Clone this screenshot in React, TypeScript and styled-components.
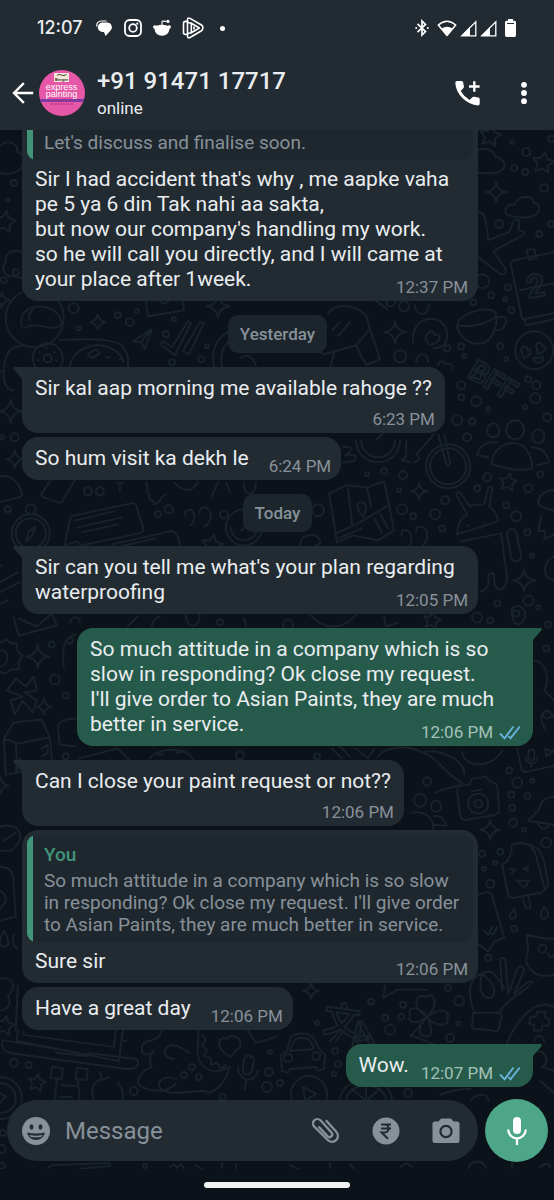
import React from "react";
import styled, { createGlobalStyle } from "styled-components";

const color = {
  panel: "#232b32",
  canvas: "#0b1219",
  doodle: "#19222a",
  text: "#e9edf0",
  muted: "#87919a",
  chip: "#1c252b",
  quote: "#1f272e",
  accent: "#429479",
  sent: "#265b4b",
  sentMuted: "#a3c1b7",
  mic: "#4ca687",
  tick: "#68b4dd",
};

const Global = createGlobalStyle`
  *, *::before, *::after { box-sizing: border-box; }
  body { margin: 0; background: ${color.canvas}; font-family: Roboto, "Noto Sans", sans-serif; color: ${color.text}; }
  button { border: 0; padding: 0; background: none; color: inherit; font: inherit; cursor: pointer; display: flex; align-items: center; justify-content: center; }
  svg { display: block; flex: none; }
`;

const Screen = styled.div`
  min-height: 100vh;
  display: flex;
  flex-direction: column;
`;

const TopBar = styled.header`
  background: ${color.panel};
  display: flex;
  flex-direction: column;
`;

const StatusBar = styled.div`
  height: 56px;
  padding: 0 38px 0 37px;
  display: flex;
  align-items: center;
  justify-content: space-between;
`;

const StatusGroup = styled.div<{ $gap: number }>`
  display: flex;
  align-items: center;
  gap: ${(p) => p.$gap}px;
`;

const Clock = styled.time`
  margin-right: 2px;
  font-family: Inter, sans-serif;
  font-size: 18px;
  font-weight: 500;
  line-height: 24px;
`;

const MoreDot = styled.span`
  width: 5px;
  height: 5px;
  margin-left: 5px;
  border-radius: 50%;
  background: #fff;
`;

const ContactBar = styled.div`
  height: 74px;
  padding: 0 18px 0 12px;
  display: flex;
  align-items: center;
`;

const Avatar = styled.span`
  display: flex;
  margin: 0 12px 0 5px;
`;

const Contact = styled.div`
  flex: 1;
  min-width: 0;
`;

const ContactName = styled.h1`
  margin: 0;
  font-size: 24px;
  font-weight: 500;
  line-height: 30px;
  white-space: nowrap;
`;

const Presence = styled.p`
  margin: 0;
  font-size: 17px;
  line-height: 24px;
`;

const HeaderActions = styled.div`
  display: flex;
  gap: 31px;
  align-items: center;
`;

const Chat = styled.main`
  position: relative;
  flex: 1;
  display: flex;
  flex-direction: column;
  padding-bottom: 7px;
  overflow: hidden;
`;

const Wallpaper = styled.svg`
  position: absolute;
  inset: 0;
  width: 100%;
  height: 100%;
  fill: none;
  stroke: ${color.doodle};
  stroke-width: 2;
  stroke-linecap: round;
  stroke-linejoin: round;
  font-family: Roboto, "Noto Sans CJK SC", sans-serif;
  font-weight: 700;
`;

const Thread = styled.div`
  position: relative;
  flex: 1;
  display: flex;
  flex-direction: column;
  padding: 0 21px 12px 22px;
`;

const Chip = styled.div`
  align-self: center;
  margin-top: 14px;
  padding: 8px 12px;
  border-radius: 10px;
  background: ${color.chip};
  color: ${color.muted};
  font-size: 17px;
  font-weight: 500;
  line-height: 22px;
`;

type Side = "in" | "out";

const BubbleBox = styled.article<{ $side: Side; $tail: boolean; $cut: boolean }>`
  position: relative;
  align-self: ${(p) => (p.$side === "in" ? "flex-start" : "flex-end")};
  max-width: calc(100% - 55px);
  margin-top: ${(p) => (p.$cut ? 0 : p.$tail ? 14 : 4)}px;
  background: ${(p) => (p.$side === "in" ? color.panel : color.sent)};
  border-radius: ${(p) =>
    p.$cut
      ? "0 0 16px 16px"
      : !p.$tail
        ? "16px"
        : p.$side === "in"
          ? "0 16px 16px 16px"
          : "16px 0 16px 16px"};
`;

const Tail = styled.svg<{ $side: Side }>`
  position: absolute;
  top: 0;
  ${(p) => (p.$side === "in" ? "left: -9px;" : "right: -9px; transform: scaleX(-1);")}
  fill: ${(p) => (p.$side === "in" ? color.panel : color.sent)};
`;

const Body = styled.div<{ $below: boolean; $afterQuote: boolean }>`
  display: ${(p) => (p.$below ? "flex" : "flow-root")};
  flex-direction: column;
  padding: ${(p) => (p.$afterQuote ? 7 : 9)}px 13px 6px;
  font-size: 21px;
  line-height: 25px;
  white-space: pre-line;
`;

const Meta = styled.span<{ $side: Side; $below: boolean }>`
  float: right;
  align-self: flex-end;
  display: flex;
  align-items: center;
  gap: 6px;
  margin: ${(p) => (p.$below ? 10 : 12)}px -3px 0 ${(p) => (p.$side === "in" ? 20 : 12)}px;
  padding-right: ${(p) => (p.$side === "in" ? 0 : 2)}px;
  color: ${(p) => (p.$side === "in" ? color.muted : color.sentMuted)};
  font-size: 17px;
  line-height: 16px;
  white-space: nowrap;
`;

const Quote = styled.blockquote<{ $cut: boolean }>`
  margin: ${(p) => (p.$cut ? 0 : 5)}px 5px 0;
  padding: ${(p) => (p.$cut ? 2 : 9)}px 10px 6px 17px;
  border-radius: ${(p) => (p.$cut ? "0 0 9px 9px" : "9px")};
  background: linear-gradient(to right, ${color.accent} 6px, ${color.quote} 6px);
  color: ${color.muted};
  font-size: 19px;
  line-height: 22px;
`;

const QuoteAuthor = styled.cite`
  display: block;
  margin-bottom: 4px;
  color: ${color.accent};
  font-style: normal;
  font-weight: 500;
`;

const Composer = styled.form`
  position: relative;
  display: flex;
  align-items: center;
  gap: 7px;
  padding: 0 6px 0 7px;
`;

const InputPill = styled.div`
  flex: 1;
  min-width: 0;
  height: 61px;
  display: flex;
  align-items: center;
  padding: 0 18px 0 15px;
  border-radius: 31px;
  background: ${color.panel};
  color: ${color.muted};
`;

const MessageInput = styled.input`
  flex: 1;
  min-width: 0;
  margin-left: 15px;
  padding: 0;
  border: 0;
  outline: 0;
  background: none;
  color: ${color.text};
  font: 24px/30px Roboto, sans-serif;
  &::placeholder { color: ${color.muted}; opacity: 1; }
`;

const PillActions = styled.div`
  display: flex;
  align-items: center;
  gap: 32px;
`;

const MicButton = styled.button`
  && {
    width: 63px;
    height: 63px;
    border-radius: 50%;
    background: ${color.mic};
    color: #fff;
  }
`;

const GestureBar = styled.footer`
  height: 32px;
  display: flex;
  justify-content: center;
  align-items: center;
  background: ${color.canvas};
`;

const GestureHandle = styled.span`
  width: 146px;
  height: 6px;
  border-radius: 3px;
  background: #f2f2f2;
`;

/* ---------- wallpaper doodles ---------- */

const dots: [number, number, number][] = [
  [526, 152, 4], [514, 168, 3], [525, 172, 3], [544, 188, 4], [499, 224, 4], [539, 234, 3], [551, 224, 3], [512, 142, 2], [551, 139, 3],
  [482, 281, 7], [508, 287, 3], [491, 295, 3], [505, 299, 2], [511, 310, 3], [404, 306, 5], [473, 302, 3],
  [400, 356, 6], [447, 348, 3], [461, 346, 3], [500, 346, 3], [464, 356, 2], [506, 359, 2],
  [461, 385, 4], [461, 397, 3], [476, 401, 5], [528, 379, 3], [536, 385, 4], [535, 398, 5], [525, 407, 2], [547, 417, 4], [457, 420, 5], [488, 409, 2], [472, 421, 3],
  [467, 437, 4], [384, 471, 3], [367, 474, 2], [403, 475, 4], [487, 477, 4], [477, 488, 3], [540, 474, 3], [528, 488, 4],
  [399, 490, 2], [445, 500, 4], [402, 509, 5], [413, 516, 3], [435, 514, 5], [442, 528, 3], [506, 505, 3], [516, 516, 5], [527, 532, 3], [318, 510, 6], [532, 555, 2],
  [528, 600, 5], [497, 603, 3], [538, 607, 2], [477, 617, 5], [490, 620, 3], [548, 624, 3], [546, 648, 3],
  [74, 308, 5], [130, 322, 4], [118, 315, 3], [79, 328, 2], [174, 319, 2], [137, 311, 2], [166, 334, 3], [201, 359, 3], [207, 346, 2], [172, 362, 3],
  [15, 437, 4], [2, 437, 2], [88, 491, 4], [100, 491, 4], [8, 509, 3], [158, 514, 3], [169, 509, 4], [224, 514, 4],
  [14, 183, 3], [8, 200, 2], [4, 280, 3], [16, 272, 3],
  [52, 644, 3], [55, 679, 5], [66, 695, 3], [66, 756, 3], [70, 640, 3], [220, 622, 3], [288, 624, 5], [285, 765, 3], [240, 755, 4],
  [317, 756, 3], [427, 781, 4], [509, 770, 3], [517, 782, 5], [532, 780, 2], [527, 795, 3], [511, 794, 3], [512, 807, 3], [513, 822, 4], [524, 829, 2], [546, 842, 5],
  [482, 853, 3], [500, 851, 3], [484, 868, 2], [490, 883, 4], [495, 862, 2], [488, 957, 3], [514, 928, 3],
  [459, 1000, 5], [448, 987, 3], [371, 1001, 3], [403, 1004, 3], [385, 1017, 3], [401, 1016, 3], [390, 1029, 5], [317, 1022, 2], [458, 1023, 2], [450, 1037, 4],
  [335, 1050, 3], [338, 1063, 3], [334, 1073, 2], [408, 1092, 4], [280, 1082, 3],
  [14, 1062, 4], [29, 1064, 3], [134, 1090, 4], [192, 1066, 3], [184, 1074, 3], [199, 1076, 3], [270, 1051, 2], [269, 1071, 4], [267, 1086, 5], [223, 1096, 3],
  [3, 1132, 3], [2, 1148, 4], [2, 1165, 3], [145, 1165, 2],
];

const sparkles: [number, number, number][] = [
  [496, 192, 10], [395, 332, 11], [98, 322, 8], [218, 306, 12], [11, 411, 12], [419, 491, 8], [524, 580, 11],
  [38, 656, 12], [44, 706, 8], [490, 829, 10], [311, 990, 8], [2, 300, 8], [15, 459, 9], [1, 785, 8],
];

const stars: [number, number, number][] = [
  [490, 136, 11], [543, 163, 11], [508, 482, 9], [5, 222, 11], [37, 1082, 9], [212, 545, 11], [432, 620, 9], [5, 1025, 10],
];

const sparklePath = (x: number, y: number, r: number) =>
  `M${x} ${y - r}Q${x + 1} ${y - 1} ${x + r} ${y}Q${x + 1} ${y + 1} ${x} ${y + r}Q${x - 1} ${y + 1} ${x - r} ${y}Q${x - 1} ${y - 1} ${x} ${y - r}z`;

const starPath = (x: number, y: number, r: number) =>
  Array.from({ length: 10 }, (_, i) => {
    const a = (i * Math.PI) / 5 - 1.4;
    const d = i % 2 ? r * 0.5 : r;
    return `${i ? "L" : "M"}${(x + d * Math.cos(a)).toFixed(1)} ${(y + d * Math.sin(a)).toFixed(1)}`;
  }).join("") + "z";

const sketches = [
  // clouds
  "M506 214c-3-7 3-11 8-9 2-10 19-11 20-2 7 1 6 9 1 12-9 4-21 3-29-1z",
  "M478 150c7-3 16 0 17 7 7 1 12 7 8 12-6 6-16 4-25 4",
  "M0 146c8-8 18-2 18 6 8 2 8 16-2 20-4 2-10 2-16 1M22 252c-10-4-18 2-16 10-6 6 0 16 8 14l8 2",
  // aeroplane
  "M478 212c7 0 8 8 10 28l21-8 4-10c2-4 6-3 6 1l-1 7 6 2c1 2-2 4-5 5l-26 14 12 17c2 6-2 8-6 5l-21-16",
  // calendar
  "M554 252l-40 8c-3 1-4 3-3 6l11 53 32-6M520 290l34-7M526 250l8-1 2 9-7 2zM524 320l2 5 28-6",
  // cup
  "M457 325c2-14 38-22 39-10 2 14-6 26-14 28-14 3-24-8-25-18zM458 325c12 3 28-1 38-9M496 318c10-4 12 2 8 8-3 5-6 4-9 4",
  // love face
  "M515 350a19 19 0 1 0 38 0a19 19 0 1 0-38 0M521 350c0-5 6-4 6 0 5-2 5 5-4 8zM536 346c0-5 6-4 6 0 5-2 5 5-4 8zM533 358l10-1c0 6-8 8-10 1",
  // bauble, heart
  "M413 342c-4-28 34-32 34-6 0 8-6 12-14 12M427 334c3-5 7-3 7 1 5-3 8 2 3 7l-7 3c-4-4-6-8-3-11z",
  "M375 300l12 9M388 300c-6 6 6 10 8 0M415 305c0 12 14 12 14-2M416 362c0-9 12-12 12 0M438 365c2-6 6-4 7-1 6-2 10 3 6 6",
  // pencil case
  "M328 313c10-12 28-8 38 2l4 14-14 16-32 9M324 354l-18-10M356 345l14-16 10 30-14 6zM334 352l-4 16M332 330l8-8M338 336l12-14",
  // satchel
  "M146 300l2 16 36-6-1-10M160 302a8 8 0 0 0 10-2",
  // ball
  "M6 318a29 29 0 1 0 58 0a29 29 0 1 0-58 0M22 326c-6-26 38-26 40-2-10 10-22-4-38 4M30 320c-2-4 0-8 4-12",
  // blossom and cookie
  "M33 358a15 15 0 1 0 30 0a15 15 0 1 0-30 0M44 358a4 4 0 1 0 8 0a4 4 0 1 0-8 0M39 352h1M46 348h1M54 352h1M38 360h1M56 360h1",
  "M60 340c30-2 60-2 64 8 6 6 4 14 4 18M70 366c4-24 44-30 54-4M88 354l8-5 4 4-8 5zM106 357h4M120 359h3",
  "M22 346c-14 0-18 10-18 30 0 8 4 14 10 14M4 370l-4 2",
  // paper plane
  "M133 341l19-12-7 20-4-7zM141 342l11-13",
  // double tick
  "M160 344l3-3 9 6 16-26 3 2-16 32zM184 349l16-27 4 1-15 31-6-3",
  // big ring
  "M214 366c-6-30 20-38 24-36M222 366c-4-20 10-28 14-28M240 358c8-6 14 0 16 8",
  // lower left shapes
  "M0 476c12-2 22 8 22 20l-22 6M50 481l-8 12c-1 2 0 4 2 4l14 5c3 1 4 0 5-2l12-20M116 483h8M120 483v8",
  "M146 482c4 6-2 10 4 12-4 8 6 4 4 10 8-2 6-8 12-10M174 482c8 8 16 12 24 0M218 482l-6 14M226 482l4 10M244 482c-2 14 12 16 12 0",
  // compass
  "M12 533a19 19 0 1 0 38 0a19 19 0 1 0-38 0M16 533a15 15 0 1 0 30 0a15 15 0 1 0-30 0M26 509a5 5 0 1 0 10 0a5 5 0 1 0-10 0M36 526l-4 10-6 5 3-10z",
  // speech bubbles
  "M66 538l4-18c1-4 3-5 5-5l56-12c4-1 5 1 6 4l6 20c1 4-1 6-4 6l-58 12-4-4-12 4zM76 520l38-9M78 527l44-10M82 532l36-8",
  "M112 544l58-13c6-1 8 3 10 13M120 546l36-8",
  // quotation marks
  "M186 516c-4-6 6-10 8-3 1 6 0 10-4 12M200 513c-2-8 10-8 11 1 0 6-3 11-7 12",
  "M402 536c-4-8 8-9 9 0 1 6-1 9-4 11M416 532c-2-8 11-8 11 2 0 6-2 10-5 11",
  // gauge
  "M226 527a18 18 0 1 0 36 0a18 18 0 1 0-36 0M231 527a13 13 0 1 0 26 0M241 530l12-10M300 545c0-6 4-10 8-10 12-2 16 8 8 10",
  // bicycle
  "M356 440a22 22 0 1 0 44 0M361 440a17 17 0 1 0 34 0M426 466a22 22 0 1 0 44 0a22 22 0 1 0-44 0M430 466a18 18 0 1 0 36 0a18 18 0 1 0-36 0M438 434l8 30c1 3 4 2 4-1l-6-29M434 434l-18 20c4 2 4 6-2 8M406 440v16l-4 4 8 2M376 440l8-8",
  "M343 447c8-2 10 2 6 5l-4 3c10-2 14 2 8 6l-10 1",
  // people
  "M487 431a6 6 0 1 0 12 0a6 8 0 1 0-12 0M506 430a9 9 0 1 0 18 0a9 10 0 1 0-18 0M532 437a6 6 0 1 0 12 0a6 8 0 1 0-12 0M491 464c2-26 40-32 41 4-12 3-28 0-41-4zM497 442c-10 0-18 2-20 13l11 2M531 447c10 0 16 6 18 15l-12 3",
  // map
  "M329 493l17-8 21 2 17-6 10 49-16 10-25-5-16 7zM336 533l22-10 30-18M338 538l24-10M348 488l4 36M367 488l4 18M374 518l8 14M380 514l8 14M358 508c-4-8 8-8 8-1 0 4-2 7-3 10-2-2-4-5-5-9z",
  // android
  "M457 534c0-14 6-18 10-20l-11-20c1-3 3-3 5 0l9 12c4-2 12-2 14-2l4-16c2-3 4-3 4 0l-3 18c4 2 8 8 9 15zM467 525h1M484 522h1M460 541l41-8 6 46c-2 4-1 8-6 10-10 0-6-16-8-16-4 0-6 1-5 4 2 10-4 14-8 14M507 534c-1-6 8-7 9-2l5 24c0 6-9 6-10 1z",
  // right edge items
  "M554 490c-10 0-16 6-16 12 2 6 8 6 16 8M541 516l-3 14 7 1-1 8 10-5M554 556c-10 4-10 14-8 20l8 4",
  "M516 624c-14-20 8-24 9-10 0 6-4 10-9 10zM513 613a3 3 0 1 0 6 0a3 3 0 1 0-6 0",
  // row under the waterproofing message
  "M14 617l5 18 38-10-4-10M19 618l18 8 14-12M70 622c4-8 10-6 10 0M128 626l10-10M160 616c-4 0-8 6-8 10M186 614c0 16 14 14 14 0M244 618l2 8M310 614c14 16 34 16 46 0M384 616l2 10 12-4",
  // gear and pinwheel
  "M0 642l6-3 6 4 5 0 1 8 5 4-4 6 0 8-8 0-5 4-6-2M0 650c10-2 10 16 0 16",
  "M16 678l10 8 8-10 3 14-12 2 12 8-4 12-10-12-8 14-4-14 12-4-16-6z",
  // milk carton
  "M4 738l10-16 28-3 8 18-32 6zM4 738l2 36 12-2-2-29M50 737l3 30M20 758c-4 8-6 14 0 14 6-1 4-8 0-14zM42 748l6-4 0 8-6 4M76 718c-8 0-16 2-18 8l2 18 16 2",
  "M76 634c-12 2-14 16-12 32M78 758l40-10 12 12M150 758c6-10 36-14 44 2M158 754h5M176 752h5M332 748l10 10M340 746l10 10M356 748l12 10 6-10",
  // right edge by the sent message
  "M534 660c12 2 16 18 10 30l10 10M546 730c-14-20 6-26 8-10M543 714a4 4 0 1 0 8 0a4 4 0 1 0-8 0",
  // whale and card
  "M378 756c6-10 30-12 44-4 16 4 20 20 40 30-4 6-18 4-26 10M422 752c16-6 44 8 42 22M462 752c2 14 28 18 40-2M517 748l4 20c1 3 3 4 6 3l27-6M528 752a3 3 0 0 1 6 0v5a3 3 0 0 1-6 0zM525 757c2 8 12 8 12 0M531 763v4M545 748l8 3-7 5z",
  // small group
  "M414 800a6 6 0 1 0 12 0a6 7 0 1 0-12 0M431 806a5 5 0 1 0 10 0a5 6 0 1 0-10 0M412 812c14-2 22 6 21 16M434 815c8 0 12 6 12 10l-12-1",
  // camera
  "M457 790c0-3 1-4 4-5l8-1 3-6 14-2 4 5 3 1c3 0 4 1 4 4l2 22c0 4-1 5-4 6l-28 5c-4 1-6-1-7-4zM468 803a10 10 0 1 0 20 0a10 10 0 1 0-20 0M474 803a4 4 0 1 0 8 0a4 4 0 1 0-8 0M471 791l10-2",
  // bell
  "M554 796c-12 0-14 8-16 14l-10 10 26 4M538 823c2 6 8 6 10 2",
  // ice cream
  "M502 864l6 30c1 3 3 4 6 3l26-5c4-1 5-3 4-6l-8-30c-4-14-14-16-24-12-3 4 2 6-2 8 2 6-4 4-2 8-3 2-4 2-6 4zM522 843c14 0 18 6 22 18l4 22c0 4-4 6-6 8M522 896l3 10c1 2 6 2 5-1l-2-10M510 868l5 1-4 4M528 866l-5 2 5 2M516 880h14M519 880c0 8 10 8 8 0",
  // drops and note
  "M514 908c-5 6-6 10-2 10 5-1 4-4 2-10zM544 906c-5 6-4 12 0 12 7-2 3-8 0-12zM478 894c6-3 12-4 14 1l12 42-10 4-6 10-10-8M484 930l4 4 4-8M490 932l3 2 4-8",
  // cat
  "M554 938l-8 0-20-4 2 14c-2 12-4 12 2 20 6 8 16 8 24 6M538 948a4 4 0 1 0 8 0a4 4 0 1 0-8 0M548 952c0 6 6 4 6 2",
  // hand
  "M473 1016c-1-4 0-4 4-4l20 0c4 0 5 2 4 5l-2 10c-1 3-3 4-6 3l-18-2c-3 0-4-2-3-5zM474 1011c-8-20-4-36 8-38 10 8 16 16 10 24-12 2-14-12-10-24M500 1011c4-12 32-24 32-30-6-2-12 8-18 12l10-24c-2-5-6-4-8 2l-8 22-3-34c-2-3-5-3-5 1l2 30M482 973c10-6 12 0 22 14",
  // clover
  "M427 1016c-18-12-10-24-2-20 10-6 14 8 2 20zM427 1016c16-12 24-4 20 2 4 8-14 8-20-2zM427 1016c8 18 2 22-3 19-8 0-4-14 3-19zM427 1016c-14 10-20 4-17-2-4-8 8-10 17 2zM424 1020l-14 16M385 985l-2 12 14-8 30 0",
  // gamepad
  "M506 1044c8-20 24-42 40-40l8 2M530 1016l6 0 1-5 8 0 0 6 4 1-1 7-6 0-1 5-7 0 0-6-5-1zM534 1040a5 5 0 0 1 10 0",
  // car
  "M282 1070l-1-16 6-4 3-12c2-6 18-8 24 0l5 10 6 6-1 14-6 2-2-4-26 2-2 4zM290 1050l4-10c4-4 12-4 16 0l4 8zM284 1057a4 4 0 1 0 8 0a4 4 0 1 0-8 0M312 1055a4 4 0 1 0 8 0a4 4 0 1 0-8 0",
  // play and citrus
  "M291 1093a18 18 0 1 0 36 0a18 18 0 1 0-36 0M303 1086l13 7-11 7zM340 1098c4-26 48-26 52 0M346 1098c4-18 36-18 40 0M366 1098v-12M352 1088l12 10M380 1088l-12 10M440 1094c10-4 16-6 30-6M470 1100c8-10 20-6 18 0",
  "M330 1040l10-10M344 1030l-8 10M410 1034l30 12M536 1050c10 0 14 12 6 16l12 4M540 1080l14 12",
  // laptop
  "M18 1030l-1 10 102 20 4-30M24 1030l0 4 90 12 2-16M2 1043c0-3 2-4 5-3l48 8 2 4 30 3 2-3 46 6c4 1 4 4 2 7-2 4-6 3-10 3L10 1052c-4-1-8-5-8-9z",
  // dinosaur
  "M162 1030c-4 14-20 6-20 18 0 8 8 6 12 2-6 8-4 14-2 16-12 4-18 16-10 20 18 8 30 2 34-4M176 1078c-16-6-22 8-12 12 14 6 42-4 44 2 12-2 18-14 22-26-12 6-20 6-28-2-8-10-2-20-4-34M190 1052c-10-6-20-12-24-4-4 6 2 10 8 10M202 1034l4 5-4 5 5 5-3 6 7 2 0 7 6-2 4 6 5-4",
  // heart and microphone
  "M230 1056c-18-12-10-22-3-18 4-6 16-2 13 8zM244 1060c0-8 10-6 10 0l-2 10c-2 6-10 4-9-2zM238 1066c0 14 16 18 20 4M246 1080l-1 8M248 1030l8 12 20-6",
  // creeper, reload, clock
  "M52 1066l11 1-1 11-11-1zM77 1067l11 1-1 11-11-1zM55 1100l2-22M80 1100l-2-20M62 1084l14 1M60 1096h12M100 1071l2 8 8-3M94 1098c-4-10 0-18 8-20M118 1082c6 6 6 12 4 18",
  "M0 1076c14 0 22 10 22 22s-8 20-22 20M0 1082c10 0 16 8 16 16s-6 14-16 14M0 1092l6 4-6 6",
  // strip below the composer
  "M48 1168c2-4 4-4 8-4l54-2v3l-30 3M170 1166l4-3 3 4 4-4 3 4M196 1164l6 4M222 1162v6M236 1163v5M290 1164l8 4M330 1162v6M350 1163l4 5M400 1166l6-4 6 4M468 1168c2-10 16-10 18 0M512 1162v6M540 1166c4-4 8-4 10 0",
  // left edge, lower half
  "M0 826c14-4 22 2 20 14l-8 10-12 0M4 840l12-8M0 866c14 0 14 10 14 20l2 30-16 4M0 890c8 4 8 12 0 18M4 930c-4 8-6 14 0 16 8 0 4-10 0-16zM14 934c-2 8 0 12 4 14M0 978c16-4 16 12 8 16 4 8 2 14-8 16M18 985l-2 44",
  "M0 565h2M8 600l-8 4M0 582l18-10M0 592l20-10M124 1040h2",
];

const Doodles = () => (
  <Wallpaper viewBox="0 130 554 1038" preserveAspectRatio="xMidYMin slice" aria-hidden="true">
    {dots.map(([x, y, r], i) => (
      <circle key={i} cx={x} cy={y} r={r} />
    ))}
    {sparkles.map(([x, y, r], i) => (
      <path key={i} d={sparklePath(x, y, r)} />
    ))}
    {stars.map(([x, y, r], i) => (
      <path key={i} d={starPath(x, y, r)} />
    ))}
    {sketches.map((d, i) => (
      <path key={i} d={d} />
    ))}
    <text x="466" y="376" fontSize="29" transform="rotate(31 466 376)">BFF</text>
    <text x="528" y="298" fontSize="32" transform="rotate(-9 528 298)">2</text>
    <text x="322" y="1030" fontSize="36" transform="rotate(8 322 1030)">文</text>
    <text x="352" y="1046" fontSize="34" transform="rotate(-8 352 1046)">A</text>
  </Wallpaper>
);

/* ---------- icons ---------- */

const MessagesIcon = () => (
  <svg width="17" height="17" viewBox="0 0 17 17">
    <path d="M.9 6.500C.2 3 2.500 1 5.500 1h5" fill="none" stroke="#fff" strokeWidth="1.200" />
    <path d="M6.500 2.500h5A4.700 4.700 0 0 1 14.800 10.200L9.500 16 8 12H6.500a4.750 4.750 0 0 1 0-9.500z" fill="#fff" />
  </svg>
);

const InstagramIcon = () => (
  <svg width="18" height="18" viewBox="0 0 18 18" fill="none" stroke="#fff" strokeWidth="1.800">
    <rect x="1" y="1" width="16" height="16" rx="4.500" />
    <circle cx="9" cy="9" r="3.800" />
    <circle cx="13.300" cy="4.700" r="1.100" fill="#fff" stroke="none" />
  </svg>
);

const RedditIcon = () => (
  <svg width="18" height="18" viewBox="0 0 18 18" fill="#fff">
    <path d="M0 7.500Q1.200 5.600 3.600 6.800Q9 4.900 14.400 6.800Q16.800 5.600 18 7.500Q18 9.200 16.500 10Q15.500 16.800 9 16.800T1.500 10Q0 9.200 0 7.500z" />
    <path d="M9 6.500V2.800Q9 2 10 2.100L13.500 2.400" fill="none" stroke="#fff" strokeWidth="1.100" />
    <circle cx="15" cy="2.400" r="1.600" />
  </svg>
);

const PlayBadgeIcon = () => (
  <svg width="22" height="22" viewBox="0 0 22 22" fill="none" stroke="#fff" strokeLinejoin="round" strokeLinecap="round" strokeWidth="1.600">
    <path d="M5.500 2.800Q5.500.2 8 1.400L19.500 8Q21 9 20.900 10.800T19.500 13.800L8 20.500Q5.500 21.600 5.500 19z" />
    <path d="M9.300 6.300L17.300 11 9.300 15.700z" />
    <path d="M12 10v2M5.500 5.500L9.300 6.300M5.500 16.500L9.300 15.700" />
    <path d="M5.500 4.400H3.500Q1.500 4.600 1.500 6.500V15.500Q1.500 17.400 3.500 17.500H5.500" />
  </svg>
);

const BluetoothIcon = () => (
  <svg width="14" height="18" viewBox="0 0 14 18" fill="none" stroke="#fff" strokeWidth="1.700">
    <path d="M2.500 4.800l8 7.800L7 16V2l3.500 3.400-8 7.800" />
    <circle cx="1.200" cy="9" r="1" fill="#fff" stroke="none" />
    <circle cx="12.800" cy="9" r="1" fill="#fff" stroke="none" />
  </svg>
);

const WifiIcon = () => (
  <svg width="20" height="17" viewBox="0 0 20 17">
    <path d="M1.300 5Q10-2.500 18.700 5L10 15.500z" fill="none" stroke="#fff" strokeWidth="1.500" strokeLinejoin="round" />
    <path d="M4.500 8.500Q10 4.800 15.500 8.500L10 15.500z" fill="#fff" />
  </svg>
);

const SignalIcon = () => (
  <svg width="17" height="17" viewBox="0 0 17 17">
    <path d="M15.800 1.800v14H1.800z" fill="none" stroke="#fff" strokeWidth="1.300" />
    <path d="M10 7v9H1z" fill="#fff" />
  </svg>
);

const BatteryIcon = () => (
  <svg width="11" height="18" viewBox="0 0 11 18">
    <path d="M3 0h5v1.800h1.500Q11 1.800 11 3.300v13Q11 18 9.500 18h-8Q0 18 0 16.300v-13Q0 1.800 1.500 1.800H3z" fill="#fff" />
    <path d="M2 4h7v1H2z" fill={color.panel} />
  </svg>
);

const BackIcon = () => (
  <svg width="22" height="22" viewBox="0 0 22 22" fill="none" stroke="#fff" strokeWidth="2.400" strokeLinecap="square">
    <path d="M20 11H2.500M11 2L2 11l9 9" />
  </svg>
);

const AvatarBadge = () => (
  <svg width="46" height="46" viewBox="0 0 46 46" role="img" aria-label="Berger express painting">
    <defs>
      <clipPath id="avatarClip">
        <circle cx="23" cy="23" r="23" />
      </clipPath>
    </defs>
    <g clipPath="url(#avatarClip)">
      <rect width="46" height="46" fill="#e657a7" />
      <rect x="15" y="3" width="15" height="9" fill="#efe6d3" />
      <path d="M18 5.500q2-2 4.500-.5t5-.5" stroke="#54423b" strokeWidth="1" fill="none" />
      <rect x="1" y="29" width="44" height="3" fill="#7a3ba3" />
      <path d="M12 30.500h22M11 34h24" stroke="#b0327e" strokeWidth="1" strokeDasharray="3 1" />
    </g>
    <g fontFamily="Liberation Sans, Arial, sans-serif" textAnchor="middle">
      <text x="22.500" y="10.500" fontSize="4" fontWeight="700" fill="#3a2b2b">Berger</text>
      <text x="22.500" y="20" fontSize="9" fill="#fff">express</text>
      <text x="22.500" y="27" fontSize="9" fill="#fff">painting</text>
    </g>
  </svg>
);

const AddCallIcon = () => (
  <svg width="26" height="26" viewBox="0 0 26 26" fill="#fff">
    <path d="M2 1h4.600Q8 1 8.200 2.500l.7 3.900q.2 1.100-.6 1.900L5.700 10.900q3.300 5.800 8.900 9l2.700-2.600q.8-.8 1.900-.6l4 .8q1.500.3 1.500 1.800v4.400q0 1.700-1.700 1.700Q14.500 24.800 7.600 18.200T.3 2.800Q.3 1 2 1z" />
    <path d="M19.300 1.200v10.600M14 6.500h10.600" stroke="#fff" strokeWidth="2.400" />
  </svg>
);

const MoreIcon = () => (
  <svg width="24" height="24" viewBox="0 0 24 24" fill="#fff">
    <circle cx="12" cy="3.800" r="2.900" />
    <circle cx="12" cy="12" r="2.900" />
    <circle cx="12" cy="20.200" r="2.900" />
  </svg>
);

const ReadTicks = () => (
  <svg width="22" height="15" viewBox="0 0 22 15" fill="none" stroke={color.tick} strokeWidth="1.900" aria-label="Read">
    <path d="M1 8.500l4.600 4.800L14.500 1.500M9.500 11l2 2.300L20.800 1.500" />
  </svg>
);

const SmileyIcon = () => (
  <svg width="28" height="28" viewBox="0 0 28 28">
    <circle cx="14" cy="14" r="14" fill="currentColor" />
    <g fill={color.panel}>
      <ellipse cx="9.500" cy="10" rx="2" ry="2.700" />
      <ellipse cx="18.500" cy="10" rx="2" ry="2.700" />
      <path d="M5 15.500q9 2 18 0Q21 23 14 23T5 15.500z" />
    </g>
    <path d="M7.500 18q6.500 1.500 13 0l-1 1.800q-5.500 1-11 0z" fill="currentColor" />
  </svg>
);

const ClipIcon = () => (
  <svg width="29" height="27" viewBox="0 0 29 27" fill="none" stroke="currentColor" strokeWidth="2.300" strokeLinecap="round">
    <path d="M15.500 4L25.300 14.800a5.900 5.900 0 0 1-8.600 8.200L3.300 9.600A4.300 4.300 0 0 1 9.500 3.300L20.700 15.800a2.700 2.700 0 0 1-4 3.600L8.200 10.200" />
  </svg>
);

const RupeeIcon = () => (
  <svg width="28" height="28" viewBox="0 0 28 28">
    <circle cx="14" cy="14" r="13.500" fill="currentColor" />
    <path d="M9 7.500h10M9 11.500h10M9 7.500h3.500q4 .3 4 4t-4 4H9.500l6.500 6.300" fill="none" stroke={color.panel} strokeWidth="2" />
  </svg>
);

const CameraIcon = () => (
  <svg width="28" height="26" viewBox="0 0 28 26">
    <path d="M10 .5h8q.8 0 1.400.6L21.500 3.500H25Q27.500 3.500 27.500 6v16.500q0 2.500-2.500 2.500H3Q.5 25 .5 22.500V6Q.5 3.500 3 3.500h3.500L8.600 1.100Q9.200.5 10 .5z" fill="currentColor" />
    <circle cx="14" cy="13.500" r="5.600" fill="none" stroke={color.panel} strokeWidth="2.200" />
  </svg>
);

const MicIcon = () => (
  <svg width="20" height="28" viewBox="0 0 20 28">
    <rect x="6" y="0" width="8" height="17" rx="4" fill="#fff" />
    <path d="M1.200 12.500a8.800 8.800 0 0 0 17.600 0M10 21.500V28" fill="none" stroke="#fff" strokeWidth="2.300" />
  </svg>
);

/* ---------- messages ---------- */

interface MessageProps {
  text: string;
  time: string;
  side?: Side;
  tail?: boolean;
  cut?: boolean;
  below?: boolean;
  quote?: { author?: string; text: string };
}

const Message = ({ text, time, side = "in", tail = false, cut = false, below = false, quote }: MessageProps) => (
  <BubbleBox $side={side} $tail={tail} $cut={cut}>
    {tail && (
      <Tail $side={side} width="10" height="13" viewBox="0 0 10 13" aria-hidden="true">
        <path d="M1.500 0H10v13L.8 2.600Q-.6 0 1.500 0z" />
      </Tail>
    )}
    {quote && (
      <Quote $cut={cut}>
        {quote.author && <QuoteAuthor>{quote.author}</QuoteAuthor>}
        {quote.text}
      </Quote>
    )}
    <Body $below={below} $afterQuote={Boolean(quote)}>
      <span>{text}</span>
      <Meta $side={side} $below={below}>
        <time>{time}</time>
        {side === "out" && <ReadTicks />}
      </Meta>
    </Body>
  </BubbleBox>
);

export default function App() {
  return (
    <Screen>
      <Global />
      <TopBar>
        <StatusBar>
          <StatusGroup $gap={11}>
            <Clock>12:07</Clock>
            <MessagesIcon />
            <InstagramIcon />
            <RedditIcon />
            <PlayBadgeIcon />
            <MoreDot />
          </StatusGroup>
          <StatusGroup $gap={8}>
            <BluetoothIcon />
            <StatusGroup $gap={3}>
              <WifiIcon />
              <SignalIcon />
              <SignalIcon />
            </StatusGroup>
            <BatteryIcon />
          </StatusGroup>
        </StatusBar>
        <ContactBar>
          <button type="button" aria-label="Back">
            <BackIcon />
          </button>
          <Avatar>
            <AvatarBadge />
          </Avatar>
          <Contact>
            <ContactName>+91 91471 17717</ContactName>
            <Presence>online</Presence>
          </Contact>
          <HeaderActions>
            <button type="button" aria-label="Add call">
              <AddCallIcon />
            </button>
            <button type="button" aria-label="More options">
              <MoreIcon />
            </button>
          </HeaderActions>
        </ContactBar>
      </TopBar>

      <Chat>
        <Doodles />
        <Thread>
          <Message
            cut
            quote={{ text: "Let's discuss and finalise soon." }}
            text={
              "Sir I had accident that's why , me aapke vaha pe 5 ya 6 din Tak nahi aa sakta,\nbut now our company's handling my work.\nso he will call you directly, and I will came at your place after 1week."
            }
            time="12:37 PM"
          />
          <Chip>Yesterday</Chip>
          <Message tail below text="Sir kal aap morning me available rahoge ??" time="6:23 PM" />
          <Message text="So hum visit ka dekh le" time="6:24 PM" />
          <Chip>Today</Chip>
          <Message tail text="Sir can you tell me what's your plan regarding waterproofing" time="12:05 PM" />
          <Message
            tail
            side="out"
            text={
              "So much attitude in a company which is so slow in responding? Ok close my request.\nI'll give order to Asian Paints, they are much better in service."
            }
            time="12:06 PM"
          />
          <Message tail below text="Can I close your paint request or not??" time="12:06 PM" />
          <Message
            quote={{
              author: "You",
              text: "So much attitude in a company which is so slow in responding? Ok close my request. I'll give order to Asian Paints, they are much better in service.",
            }}
            text="Sure sir"
            time="12:06 PM"
          />
          <Message text="Have a great day" time="12:06 PM" />
          <Message tail side="out" text="Wow." time="12:07 PM" />
        </Thread>

        <Composer onSubmit={(e) => e.preventDefault()}>
          <InputPill>
            <button type="button" aria-label="Emoji">
              <SmileyIcon />
            </button>
            <MessageInput type="text" placeholder="Message" aria-label="Message" />
            <PillActions>
              <button type="button" aria-label="Attach">
                <ClipIcon />
              </button>
              <button type="button" aria-label="Payment">
                <RupeeIcon />
              </button>
              <button type="button" aria-label="Camera">
                <CameraIcon />
              </button>
            </PillActions>
          </InputPill>
          <MicButton type="button" aria-label="Record voice message">
            <MicIcon />
          </MicButton>
        </Composer>
      </Chat>

      <GestureBar>
        <GestureHandle />
      </GestureBar>
    </Screen>
  );
}
